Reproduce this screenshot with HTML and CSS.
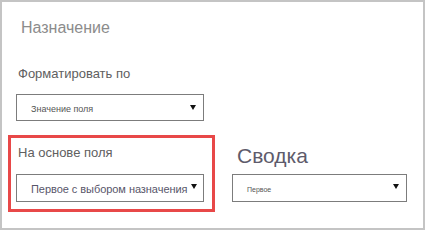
FILE: index.html
```html
<!DOCTYPE html>
<html lang="ru">
<head>
<meta charset="utf-8">
<link rel="stylesheet" href="styles.css">
</head>
<body>
<div class="panel">
  <div class="title">Назначение</div>
  <div class="label label-format">Форматировать по</div>
  <div class="select select-wide"><span class="select-text t9">Значение поля</span><span class="arrow"></span></div>
  <div class="row">
    <div class="highlight">
      <div class="label label-base">На основе поля</div>
      <div class="select select-wide select-tall select-tight"><span class="select-text t12">Первое с выбором назначения</span><span class="arrow arrow-up"></span></div>
    </div>
    <div class="summary">
      <div class="summary-title">Сводка</div>
      <div class="select select-summary select-tall"><span class="select-text t7">Первое</span><span class="arrow arrow-up"></span></div>
    </div>
  </div>
</div>
</body>
</html>
```
FILE: styles.css
```css
html, body {
  margin: 0;
  padding: 0;
  background: #ffffff;
}
body {
  font-family: "Liberation Sans", Arial, sans-serif;
}
.panel {
  width: 425px;
  height: 230px;
  box-sizing: border-box;
  border: 2px solid #c4c4c4;
  padding: 17px 0 0 14px;
  display: flex;
  flex-direction: column;
  align-items: flex-start;
}
.title {
  font-size: 16px;
  line-height: 18px;
  color: #8c8c8c;
  margin-left: 5px;
}
.label {
  font-size: 13px;
  line-height: 15px;
  color: #606060;
}
.label-format {
  margin-top: 29px;
  margin-left: 2px;
}
.select {
  box-sizing: border-box;
  border: 1px solid #7c7c7c;
  height: 27px;
  display: flex;
  align-items: center;
  padding: 0 7px 0 14px;
  color: #555;
  background: #fff;
}
.select-wide {
  width: 188px;
  margin-top: 13px;
}
.select-tall {
  height: 28px;
}
.select-tight {
  padding-right: 6px;
}
.select-summary {
  width: 175px;
  margin-top: 6px;
}
.select-text {
  white-space: nowrap;
  padding-top: 2px;
  flex: none;
}
.t9 { font-size: 9px; }
.t12 { font-size: 11px; letter-spacing: -0.05px; padding-top: 1px; color: #58566a; }
.t7 { font-size: 7px; color: #555; }
.arrow {
  margin-left: auto;
  width: 0;
  height: 0;
  border-left: 3px solid transparent;
  border-right: 3px solid transparent;
  border-top: 5px solid #111;
  flex: none;
}
.arrow-up {
  margin-bottom: 4px;
}
.row {
  display: flex;
  align-items: flex-start;
  margin-top: 14px;
  margin-left: -8px;
}
.highlight {
  width: 207px;
  height: 77px;
  box-sizing: border-box;
  border: 3px solid #e84848;
  padding: 7px 0 0 5px;
  display: flex;
  flex-direction: column;
  align-items: flex-start;
}
.label-base {
  margin-left: 2px;
}
.highlight .select-wide {
  margin-top: 14px;
}
.summary {
  margin-left: 17px;
  padding-top: 9px;
  display: flex;
  flex-direction: column;
  align-items: flex-start;
}
.summary-title {
  font-size: 21px;
  line-height: 24px;
  color: #5e5b6b;
  margin-left: 5px;
}
```
